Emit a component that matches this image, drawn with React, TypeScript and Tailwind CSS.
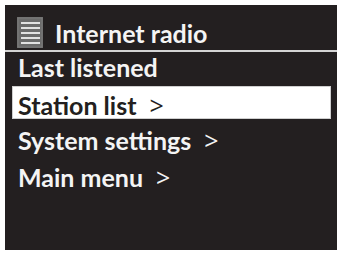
export default function App() {
  const font = { fontFamily: "Lato, 'Open Sans', sans-serif" };
  const arrow = (
    <span className="ml-[13px] font-normal" style={{ fontFamily: "'Open Sans', sans-serif" }}>
      &gt;
    </span>
  );
  return (
    <div className="h-[254px] w-[337px] bg-white pl-[5px] pt-[5px] pb-[4px]" style={font}>
      <div className="flex h-full w-full flex-col bg-[#231f20] font-bold text-[25px] leading-[24px] text-[#f4f4f4]">
        <div className="flex h-[45px] items-start pl-[12px] pt-[12px]">
          <svg width="26" height="31" viewBox="0 0 26 31" className="shrink-0">
            <rect x="0" y="0" width="26" height="31" fill="#6b6b6b" />
            <rect x="1" y="1" width="24" height="29" fill="none" stroke="#7c7c7c" strokeWidth="1" />
            {[5, 10, 15, 20, 25].map((y) => (
              <rect key={y} x="4" y={y} width="19" height="2" fill="#e2e2e2" />
            ))}
          </svg>
          <span className="ml-[12px] mt-[4px]">Internet radio</span>
        </div>
        <div className="h-[2px] bg-[#d4d4d4]" />
        <div className="mt-[3px] pl-[13px]">Last listened</div>
        <div className="ml-[7px] mr-[6px] mt-[7px] h-[33px] border border-[#cfcfcf] bg-white pl-[5px] pt-[6px] text-[#231f20]">
          Station list{arrow}
        </div>
        <div className="mt-[9px] pl-[13px]">System settings{arrow}</div>
        <div className="mt-[13px] pl-[13px]">Main menu{arrow}</div>
      </div>
    </div>
  );
}
